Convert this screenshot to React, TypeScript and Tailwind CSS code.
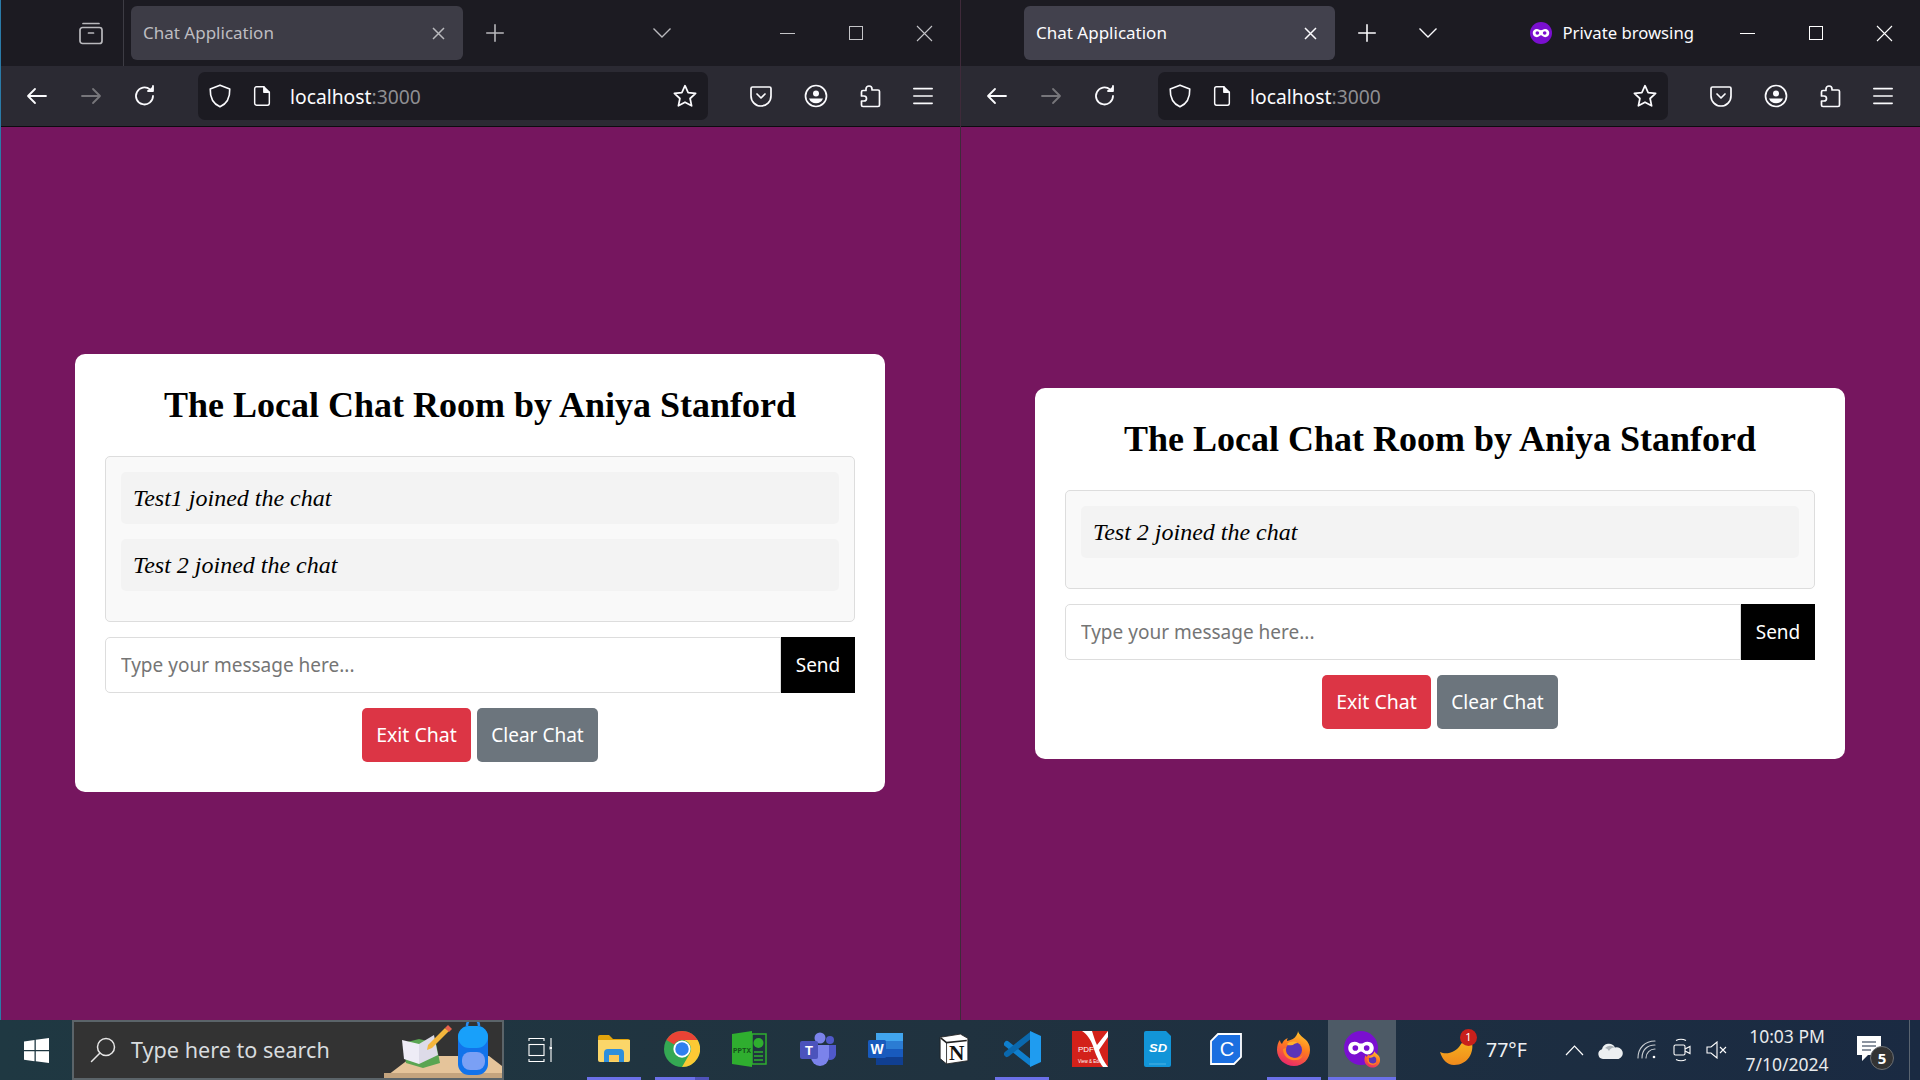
import type { ReactNode } from "react";

const UI = "font-['Noto_Sans','Open_Sans',sans-serif]";
const SERIF = "font-['Liberation_Serif','Times_New_Roman',serif]";

function Ico({ s = 24, c = "#fbfbfe", w = 2, children }: { s?: number; c?: string; w?: number; children: ReactNode }) {
  return (
    <svg width={s} height={s} viewBox="0 0 24 24" fill="none" stroke={c} strokeWidth={w} strokeLinecap="round" strokeLinejoin="round">
      {children}
    </svg>
  );
}

function MaskIcon({ s = 22 }: { s?: number }) {
  return (
    <svg width={s} height={s} viewBox="0 0 24 24">
      <circle cx="12" cy="12" r="12" fill="#7a0fd0" />
      <path d="M7.500 7.500c2 0 3.300 1.400 4.500 1.400s2.500-1.400 4.500-1.400c2.800 0 4.500 2 4.500 4.500s-1.700 4.500-4.500 4.500c-2 0-3.300-2-4.500-2s-2.500 2-4.500 2C4.700 16.500 3 14.500 3 12s1.700-4.500 4.500-4.500z" fill="#fff" />
      <circle cx="8" cy="12" r="2" fill="#7a0fd0" />
      <circle cx="16" cy="12" r="2" fill="#7a0fd0" />
    </svg>
  );
}

function FirefoxLogo({ s = 36, id = "fx" }: { s?: number; id?: string }) {
  return (
    <svg width={s} height={s} viewBox="0 0 36 36">
      <defs>
        <linearGradient id={id} x1="0.7" y1="0" x2="0.3" y2="1">
          <stop offset="0" stopColor="#ffc62e" />
          <stop offset="0.45" stopColor="#ff7a1f" />
          <stop offset="1" stopColor="#e8246e" />
        </linearGradient>
      </defs>
      <path d="M22 0c1 4 5 6 8 9 2 2 4 5 4 10 0 9-7 16-16 16S1 28 1 19c0-4 1-8 3-10 0 2 1 3 2 4 1-3 3-5 6-6-1 1-1 2-1 3 4-1 7-2 9-5 1-2 2-3 2-5z" fill={`url(#${id})`} />
      <circle cx="18" cy="19" r="8" fill="#5a35b8" />
      <path d="M11 13c3-3 8-3 11-1-3 0-4 1-5 2-3 0-5 1-6-1z" fill="#ffb02e" />
      <path d="M7 18c0 7 6 12 13 11 3 0 6-2 7-5-3 3-8 4-12 2-4-2-6-5-5-9z" fill="#ff8a1f" />
    </svg>
  );
}

function ChromeLogo() {
  return (
    <svg width="36" height="36" viewBox="0 0 48 48">
      <circle cx="24" cy="24" r="24" fill="#34a853" />
      <path d="M44.800 12H24a12 12 0 0 1 10.400 18L24 48A24 24 0 0 0 44.800 12z" fill="#fcc934" />
      <path d="M13.600 18L3.200 12a24 24 0 0 1 41.600 0H24a12 12 0 0 0-10.400 6z" fill="#ea4335" />
      <circle cx="24" cy="24" r="11.500" fill="#fff" />
      <circle cx="24" cy="24" r="9" fill="#2f7fee" />
    </svg>
  );
}

function Explorer() {
  return (
    <svg width="32" height="28" viewBox="0 0 32 28">
      <path d="M0 2a2 2 0 0 1 2-2h9l4 4h15a2 2 0 0 1 2 2v4H0z" fill="#e2a40c" />
      <path d="M0 5h32v20a2 2 0 0 1-2 2H2a2 2 0 0 1-2-2z" fill="#fbd669" />
      <path d="M6 27v-9a4 4 0 0 1 4-4h12a4 4 0 0 1 4 4v9h-5v-7H11v7z" fill="#2f8fdc" />
      <rect x="11" y="20" width="10" height="6" fill="#fbc95a" />
    </svg>
  );
}

function Pptx() {
  return (
    <svg width="36" height="36" viewBox="0 0 36 36">
      <path d="M0 3l20-3v36L0 33z" fill="#2fae2f" />
      <rect x="20" y="3" width="14" height="30" fill="none" stroke="#2fae2f" strokeWidth="1.500" />
      <circle cx="26.500" cy="12" r="5" fill="#2fae2f" />
      <path d="M22 21h9M22 25h9M22 29h9" stroke="#2fae2f" strokeWidth="1.500" />
      <text x="1" y="22" fontSize="7.500" fontWeight="700" fontFamily="Liberation Mono, monospace" fill="#14521a">PPTX</text>
    </svg>
  );
}

function Teams() {
  return (
    <svg width="36" height="34" viewBox="0 0 36 34">
      <circle cx="20" cy="6" r="5.500" fill="#7b83eb" />
      <circle cx="30" cy="8" r="4" fill="#5059c9" />
      <path d="M25 13h11v10a6 6 0 0 1-7 5z" fill="#5059c9" />
      <path d="M11 13h18v12a9 9 0 0 1-18 0z" fill="#7b83eb" />
      <rect x="0" y="9" width="18" height="18" rx="2" fill="#4b53bc" />
      <text x="9" y="23" textAnchor="middle" fontSize="13" fontWeight="700" fontFamily="Liberation Sans, sans-serif" fill="#fff">T</text>
    </svg>
  );
}

function Word() {
  return (
    <svg width="36" height="32" viewBox="0 0 36 32">
      <rect x="8" y="0" width="27" height="8" fill="#41a5ee" />
      <rect x="8" y="8" width="27" height="8" fill="#2b7cd3" />
      <rect x="8" y="16" width="27" height="8" fill="#185abd" />
      <rect x="8" y="24" width="27" height="8" fill="#103f91" />
      <rect x="0" y="7" width="18" height="18" rx="1.500" fill="#185abd" />
      <text x="9" y="21" textAnchor="middle" fontSize="14" fontWeight="700" fontFamily="Liberation Sans, sans-serif" fill="#fff">W</text>
    </svg>
  );
}

function Notion() {
  return (
    <svg width="30" height="32" viewBox="0 0 28 30">
      <path d="M1 4l19-3 7 4v21l-20 3-6-5z" fill="#fff" stroke="#222" strokeWidth="0.800" />
      <path d="M1.500 4.500L7 9l19-2" fill="none" stroke="#222" strokeWidth="1.500" />
      <path d="M7 9v20" stroke="#222" strokeWidth="0.800" />
      <text x="16.500" y="25" textAnchor="middle" fontSize="20" fontWeight="700" fontFamily="Liberation Serif, serif" fill="#111">N</text>
    </svg>
  );
}

function VsCode() {
  return (
    <svg width="37" height="36" viewBox="0 0 37 36">
      <path d="M3 13l24 19" stroke="#0f7fce" strokeWidth="6" strokeLinecap="round" />
      <path d="M3 23L27 4" stroke="#0a68ad" strokeWidth="6" strokeLinecap="round" />
      <path d="M26 0l11 5v26l-11 5z" fill="#1f9cf0" />
    </svg>
  );
}

function PdfIcon() {
  return (
    <svg width="36" height="36" viewBox="0 0 36 36">
      <rect width="36" height="36" fill="#d3211a" />
      <path d="M10 0h10c2 6 3 10 5 14L36 0v6L27 19c2 6 5 12 9 17h-5c-4-5-8-14-10-21C19 9 15 3 10 0z" fill="#fff" />
      <text x="6" y="21" fontSize="8" fontFamily="Liberation Sans, sans-serif" fill="#fff">PDF</text>
      <text x="6" y="32" fontSize="4.500" fontFamily="Liberation Sans, sans-serif" fill="#fff">View &amp; Edit</text>
    </svg>
  );
}

function SdIcon() {
  return (
    <svg width="28" height="36" viewBox="0 0 28 36">
      <path d="M2 0h20l5 5v29a2 2 0 0 1-2 2H2a2 2 0 0 1-2-2V2a2 2 0 0 1 2-2z" fill="#1295d8" />
      <text x="14" y="21" textAnchor="middle" fontSize="11" fontWeight="700" fontStyle="italic" fontFamily="Liberation Sans, sans-serif" fill="#fff" textLength="18" lengthAdjust="spacingAndGlyphs">SD</text>
      <path d="M5 33h17" stroke="#5fbce8" strokeWidth="0.800" />
    </svg>
  );
}

function CIcon() {
  return (
    <svg width="32" height="32" viewBox="0 0 32 32">
      <path d="M8 1h23v23l-7 7H1V8z" fill="#1b6fe0" stroke="#fff" strokeWidth="1.800" />
      <text x="17" y="23" textAnchor="middle" fontSize="20" fontFamily="Liberation Sans, sans-serif" fill="#fff">C</text>
    </svg>
  );
}

function PrivateTask() {
  return (
    <div className="relative h-[36px] w-[36px]">
      <MaskIcon s={34} />
      <div className="absolute bottom-[-1px] right-[-1px]">
        <FirefoxLogo s={17} id="fx-small" />
      </div>
    </div>
  );
}

function SearchArt() {
  return (
    <svg width="118" height="59" viewBox="0 0 118 59">
      <path d="M0 59L29 37h76l13 10v12z" fill="#e5c49a" />
      <rect x="0" y="54" width="118" height="5" fill="#c4a47e" />
      <path d="M19 24l16-4 17 4 4 20-17 5-17-5z" fill="#5aa552" />
      <path d="M18 21l17 4v20l-15-5z" fill="#eeecf6" />
      <path d="M35 25l15-9 4 20-19 9z" fill="#dddbe8" />
      <path d="M44 26l17-17 4 3-17 17-5 2z" fill="#f4b63c" />
      <path d="M61 9l3-3 4 4-3 3z" fill="#e8604c" />
      <rect x="74" y="7" width="30" height="49" rx="11" fill="#1273ea" />
      <path d="M83 7c0-9 12-9 12 0" fill="none" stroke="#2a8cf0" strokeWidth="2.500" />
      <rect x="78" y="33" width="23" height="18" rx="8" fill="#7aa0f5" />
      <rect x="74" y="7" width="30" height="22" rx="11" fill="#18a0fa" />
    </svg>
  );
}

function TabBarIcons({ dim }: { dim?: boolean }) {
  const c = dim ? "#b9b9bd" : "#fbfbfe";
  return (
    <>
      <div className="ml-[12px] flex h-[40px] w-[40px] items-center justify-center">
        <Ico s={22} c={c} w={1.700}>
          <path d="M12 3v18M3 12h18" />
        </Ico>
      </div>
      <TabChevron c={c} dim={dim} />
    </>
  );
}

function TabChevron({ c, dim }: { c: string; dim?: boolean }) {
  return (
    <div className={dim ? "ml-[127px] flex h-[40px] w-[40px] items-center justify-center" : "ml-[21px] flex h-[40px] w-[40px] items-center justify-center"}>
      <svg width="20" height="12" viewBox="0 0 20 12" fill="none" stroke={c} strokeWidth="1.400">
        <path d="M1.500 1.500L10 10l8.500-8.500" />
      </svg>
    </div>
  );
}

function WindowControls({ dim }: { dim?: boolean }) {
  const c = dim ? "#c4c4c8" : "#ffffff";
  return (
    <div className="mr-[1px] flex">
      <div className="flex h-[66px] w-[68px] items-center justify-center">
        <div className="h-px w-[15px]" style={{ background: c }} />
      </div>
      <div className="flex h-[66px] w-[69px] items-center justify-center">
        <div className="h-[14px] w-[14px] border" style={{ borderColor: c }} />
      </div>
      <div className="flex h-[66px] w-[69px] items-center justify-center">
        <svg width="17" height="17" viewBox="0 0 17 17" stroke={c} strokeWidth="1.100">
          <path d="M1 1l15 15M16 1L1 16" />
        </svg>
      </div>
    </div>
  );
}

function Toolbar() {
  return (
    <div className="flex h-[61px] items-start border-b border-[#0c0c0f] bg-[#2b2a33] pl-[9px] pt-[6px]">
      <div className="flex h-[48px] w-[54px] items-center justify-center">
        <Ico s={24} w={1.800}><path d="M21 12H3M10 5l-7 7 7 7" /></Ico>
      </div>
      <div className="flex h-[48px] w-[54px] items-center justify-center">
        <Ico s={24} c="#77767b" w={1.800}><path d="M3 12h18M14 5l7 7-7 7" /></Ico>
      </div>
      <div className="flex h-[48px] w-[54px] items-center justify-center">
        <Ico s={24} w={1.800}>
          <path d="M20 12a8.500 8.500 0 1 1-3-6.500" />
          <path d="M20 2v5h-5" fill="#fbfbfe" />
        </Ico>
      </div>
      <div className="ml-[26px] flex h-[48px] w-[510px] items-center rounded-[7px] bg-[#1c1b22] pl-[9px] pr-[10px]">
        <Ico s={26} w={1.500}><path d="M12 2l9 3.500c.3 8-2.500 13.500-9 16.500C5.500 19 2.700 13.500 3 5.500z" /></Ico>
        <div className="ml-[18px]">
          <Ico s={22} w={1.600}><path d="M6 2h8l6 6v12a2 2 0 0 1-2 2H6a2 2 0 0 1-2-2V4a2 2 0 0 1 2-2z" /><path d="M14 2v6h6" fill="#fbfbfe" /></Ico>
        </div>
        <span className={`ml-[17px] mt-[2px] text-[19.300px] leading-none text-[#fbfbfe] ${UI}`}>
          localhost<span className="text-[#8f8f92]">:3000</span>
        </span>
        <div className="ml-auto">
          <Ico s={26} w={1.600}><path d="M12 2.500l2.900 6.300 6.900.8-5.100 4.700 1.400 6.800-6.100-3.400-6.100 3.400 1.400-6.800-5.100-4.700 6.900-.8z" /></Ico>
        </div>
      </div>
      <div className="ml-[26px] flex h-[48px] w-[54px] items-center justify-center">
        <Ico s={24} w={1.700}>
          <path d="M3.500 3h17A1.500 1.500 0 0 1 22 4.500V12a10 10 0 0 1-20 0V4.500A1.500 1.500 0 0 1 3.500 3z" />
          <path d="M8 10l4 4 4-4" />
        </Ico>
      </div>
      <div className="flex h-[48px] w-[55px] items-center justify-center">
        <Ico s={24} w={1.700}>
          <circle cx="12" cy="12" r="10.500" />
          <circle cx="12" cy="9.500" r="3" fill="#fbfbfe" stroke="none" />
          <path d="M5 14.500h14a7.500 7.500 0 0 1-14 0z" fill="#fbfbfe" stroke="none" />
        </Ico>
      </div>
      <div className="flex h-[48px] w-[53px] items-center justify-center">
        <Ico s={24} w={1.700}>
          <path d="M11 2a3 3 0 0 1 3 3v1h6a1.500 1.500 0 0 1 1.500 1.500V21a1.500 1.500 0 0 1-1.500 1.500H5a1.500 1.500 0 0 1-1.500-1.500v-4H6a2.500 2.500 0 0 0 0-5H3.500V8A1.500 1.500 0 0 1 5 6.500h3V5a3 3 0 0 1 3-3z" />
        </Ico>
      </div>
      <div className="flex h-[48px] w-[53px] items-center justify-center">
        <Ico s={22} w={1.800}><path d="M2 4h20M2 12h20M2 20h20" /></Ico>
      </div>
    </div>
  );
}

function ChatCard({ messages }: { messages: string[] }) {
  return (
    <div className="mr-[1px] w-[810px] rounded-[10px] bg-white px-[30px] pb-[30px] pt-[30px]">
      <h1 className={`mb-[30px] h-[42px] text-center text-[36px] font-bold leading-[42px] text-black ${SERIF}`}>
        The Local Chat Room by Aniya Stanford
      </h1>
      <div className="rounded-[5px] border border-[#dddddd] bg-[#f9f9f9] p-[15px]">
        {messages.map((m) => (
          <div key={m} className={`mb-[15px] flex h-[52px] items-center rounded-[5px] bg-[#f3f3f3] pl-[12px] text-[24px] italic text-black ${SERIF}`}>
            {m}
          </div>
        ))}
      </div>
      <div className="mt-[15px] flex h-[56px]">
        <input
          readOnly
          placeholder="Type your message here..."
          className={`min-w-0 flex-1 rounded-l-[5px] border border-[#dddddd] bg-white pl-[15px] text-[19px] outline-none placeholder:text-[#757575] ${UI}`}
        />
        <button className={`w-[74px] bg-black text-[19px] text-white ${UI}`}>Send</button>
      </div>
      <div className="mt-[15px] flex justify-center gap-[6px]">
        <button className={`h-[54px] w-[109px] rounded-[5px] bg-[#dc3545] text-[19.500px] text-white ${UI}`}>Exit Chat</button>
        <button className={`h-[54px] w-[121px] rounded-[5px] bg-[#6c757d] text-[19px] text-white ${UI}`}>Clear Chat</button>
      </div>
    </div>
  );
}

function LeftWindow() {
  return (
    <div className="flex w-[960px] flex-col border-l border-[#2a7ba8]">
      <div className="flex h-[66px] items-center bg-[#1c1b22]">
        <div className="flex h-[66px] w-[123px] items-center justify-end border-r border-[#3d3c44] pr-[20px]">
          <svg width="24" height="24" viewBox="0 0 24 24" fill="none" stroke="#b9b9bd" strokeWidth="1.700" strokeLinecap="round">
            <path d="M4 2.500h16" />
            <rect x="1" y="6.500" width="22" height="16" rx="2.500" />
            <path d="M9.500 12h5" />
          </svg>
        </div>
        <div className={`ml-[7px] flex h-[54px] w-[332px] items-center rounded-[6px] bg-[#3d3c46] pl-[12px] pr-[18px] text-[#bdbdc1] ${UI}`}>
          <span className="text-[17px]">Chat Application</span>
          <svg className="ml-auto" width="13" height="13" viewBox="0 0 13 13" stroke="#b9b9bd" strokeWidth="1.500">
            <path d="M1 1l11 11M12 1L1 12" />
          </svg>
        </div>
        <TabBarIcons dim />
        <div className="ml-auto">
          <WindowControls dim />
        </div>
      </div>
      <Toolbar />
      <div className="flex flex-1 items-center justify-center bg-[#76165f] pb-[1px]">
        <ChatCard messages={["Test1 joined the chat", "Test 2 joined the chat"]} />
      </div>
    </div>
  );
}

function RightWindow() {
  return (
    <div className="flex w-[960px] flex-col border-l border-[#3f2a3a]">
      <div className="flex h-[66px] items-center bg-[#1c1b22]">
        <div className={`ml-[63px] flex h-[54px] w-[311px] items-center rounded-[6px] bg-[#42414d] pl-[12px] pr-[18px] text-[#fbfbfe] ${UI}`}>
          <span className="text-[17px]">Chat Application</span>
          <svg className="ml-auto" width="13" height="13" viewBox="0 0 13 13" stroke="#fbfbfe" strokeWidth="1.500">
            <path d="M1 1l11 11M12 1L1 12" />
          </svg>
        </div>
        <TabBarIcons />
        <div className="ml-auto mr-[19px] flex items-center">
          <MaskIcon />
          <span className={`ml-[11px] text-[16.700px] text-[#fbfbfe] ${UI}`}>Private browsing</span>
        </div>
        <WindowControls />
      </div>
      <Toolbar />
      <div className="flex flex-1 items-center justify-center bg-[#76165f]">
        <ChatCard messages={["Test 2 joined the chat"]} />
      </div>
    </div>
  );
}

function Slot({ active, split, highlight, children }: { active?: boolean; split?: boolean; highlight?: boolean; children: ReactNode }) {
  return (
    <div className={highlight ? "relative flex h-[60px] w-[68px] items-center justify-center bg-[#4d5a66] pb-[2px]" : "relative flex h-[60px] w-[68px] items-center justify-center pb-[2px]"}>
      {children}
      {active && (
        <div className={highlight ? "absolute bottom-0 left-0 right-0 flex h-[3px]" : "absolute bottom-0 left-[7px] right-[7px] flex h-[3px]"}>
          <div className="flex-1 bg-[#6b70e8]" />
          {split && <div className="w-[14px] bg-[#4f52b8]" />}
        </div>
      )}
    </div>
  );
}

function Taskbar() {
  return (
    <div className="flex h-[60px] items-stretch bg-gradient-to-r from-[#1f3842] via-[#20323f] to-[#1a2a42] text-white">
      <div className="flex w-[72px] items-center justify-center">
        <svg width="25" height="25" viewBox="0 0 25 25" fill="#fff">
          <path d="M0 3.500l10.500-1.500v10H0zM11.800 1.800L25 0v12H11.800zM0 13.200h10.500v10L0 21.700zM11.800 13.200H25V25l-13.200-1.800z" />
        </svg>
      </div>
      <div className="relative flex w-[432px] items-center overflow-hidden border-2 border-[#5b6469] bg-[#333333] pl-[16px]">
        <svg width="26" height="26" viewBox="0 0 26 26" fill="none" stroke="#e6e6e6" strokeWidth="1.500" strokeLinecap="round">
          <circle cx="16" cy="10" r="8.500" />
          <path d="M10 16L1.500 24.500" />
        </svg>
        <span className={`ml-[15px] mt-[1px] text-[21.600px] text-[#d8dcdf] ${UI}`}>Type here to search</span>
        <div className="absolute bottom-0 right-0">
          <SearchArt />
        </div>
      </div>
      <div className="flex w-[76px] items-center justify-center pr-[4px]">
        <svg width="24" height="24" viewBox="0 0 24 24" fill="none" stroke="#fff" strokeWidth="1.100">
          <path d="M1 3V0.500h15V3M1 21v2.500h15V21" />
          <rect x="1" y="6.500" width="15" height="11" />
          <path d="M23 0v8M23 12v12" />
          <rect x="21.500" y="8.500" width="3" height="3" fill="#fff" stroke="none" />
        </svg>
      </div>
      <Slot active><Explorer /></Slot>
      <Slot active split><ChromeLogo /></Slot>
      <Slot><Pptx /></Slot>
      <Slot><Teams /></Slot>
      <Slot><Word /></Slot>
      <Slot><Notion /></Slot>
      <Slot active><VsCode /></Slot>
      <Slot><PdfIcon /></Slot>
      <Slot><SdIcon /></Slot>
      <Slot><CIcon /></Slot>
      <Slot active><FirefoxLogo /></Slot>
      <Slot highlight active><PrivateTask /></Slot>
      <div className="ml-[34px] flex w-[110px] items-center">
        <div className="relative ml-[10px] h-[32px] w-[36px]">
          <svg width="34" height="26" viewBox="0 0 34 26" className="absolute bottom-0 left-0">
            <defs>
              <linearGradient id="moon" x1="0" y1="0" x2="0" y2="1">
                <stop offset="0" stopColor="#f6b21f" />
                <stop offset="1" stopColor="#f08a1c" />
              </linearGradient>
            </defs>
            <path d="M0 12c6 3 16 1 21-8 3-4 9-4 11-1 2 9-4 22-18 22C7 25 2 19 0 12z" fill="url(#moon)" />
          </svg>
          <div className={`absolute right-[-1px] top-[-5px] flex h-[17px] w-[17px] items-center justify-center rounded-full bg-[#c8201c] text-[11px] text-white ${UI}`}>1</div>
        </div>
        <span className={`ml-[10px] text-[19.500px] text-[#eef0f2] ${UI}`}>77°F</span>
      </div>
      <div className="ml-[16px] flex w-[36px] items-center justify-center">
        <svg width="19" height="11" viewBox="0 0 19 11" fill="none" stroke="#fff" strokeWidth="1.200"><path d="M1 10l8.500-9 8.500 9" /></svg>
      </div>
      <div className="flex w-[37px] items-center justify-center">
        <svg width="25" height="17" viewBox="0 0 25 17">
          <path d="M5 17a5 5 0 0 1-1-9.800A7 7 0 0 1 17 5.500a5.500 5.500 0 0 1 3.500 11.500z" fill="#eceff1" />
          <path d="M7 6a7 7 0 0 1 10-.5A6 6 0 0 0 11 9 5 5 0 0 0 7 6z" fill="#a9b0b6" />
        </svg>
      </div>
      <div className="flex w-[35px] items-center justify-center">
        <svg width="20" height="20" viewBox="0 0 20 20" fill="none" stroke="#c9ced2" strokeWidth="1.100" strokeLinecap="round">
          <path d="M1 18C1 8 8 1 18 1M5 18C5 10 10 5 18 5M9 18c0-5 4-9 9-9" />
          <circle cx="17" cy="17" r="1.300" fill="#fff" stroke="none" />
        </svg>
      </div>
      <div className="flex w-[35px] items-center justify-center">
        <svg width="18" height="24" viewBox="0 0 18 24" fill="none" stroke="#fff" strokeWidth="1.100">
          <rect x="1" y="7" width="11" height="10" rx="1.500" />
          <path d="M12 11l5-2.500v7L12 13M3 2.500c3-1.500 7-1.500 10 0M3 21.500c3 1.500 7 1.500 10 0" />
        </svg>
      </div>
      <div className="flex w-[35px] items-center justify-center">
        <svg width="22" height="18" viewBox="0 0 22 18" fill="none" stroke="#fff" strokeWidth="1.100">
          <path d="M1 6h4l6-5v16l-6-5H1zM14 6l6 6M20 6l-6 6" />
        </svg>
      </div>
      <div className={`flex w-[106px] flex-col items-center justify-center text-[17.500px] leading-[28px] text-[#e8eaec] ${UI}`}>
        <span>10:03 PM</span>
        <span>7/10/2024</span>
      </div>
      <div className="ml-[1px] flex w-[58px] items-center justify-center">
        <div className="relative h-[28px] w-[26px]">
          <svg width="24" height="26" viewBox="0 0 24 26" fill="#fff">
            <path d="M0 0h24v19H11l-6 6v-6H0z" />
            <path d="M5 6h14M5 10h14M5 14h9" stroke="#1a2a42" strokeWidth="1.100" />
          </svg>
          <div className={`absolute bottom-[-6px] right-[-11px] flex h-[24px] w-[24px] items-center justify-center rounded-full border border-[#6b6f73] bg-[#333333] text-[15px] font-bold text-white ${UI}`}>5</div>
        </div>
      </div>
      <div className="ml-[10px] w-px bg-[#5a6470]" />
    </div>
  );
}

export default function App() {
  return (
    <div className="flex h-[1080px] w-[1920px] flex-col overflow-hidden">
      <div className="flex flex-1">
        <LeftWindow />
        <RightWindow />
      </div>
      <Taskbar />
    </div>
  );
}
